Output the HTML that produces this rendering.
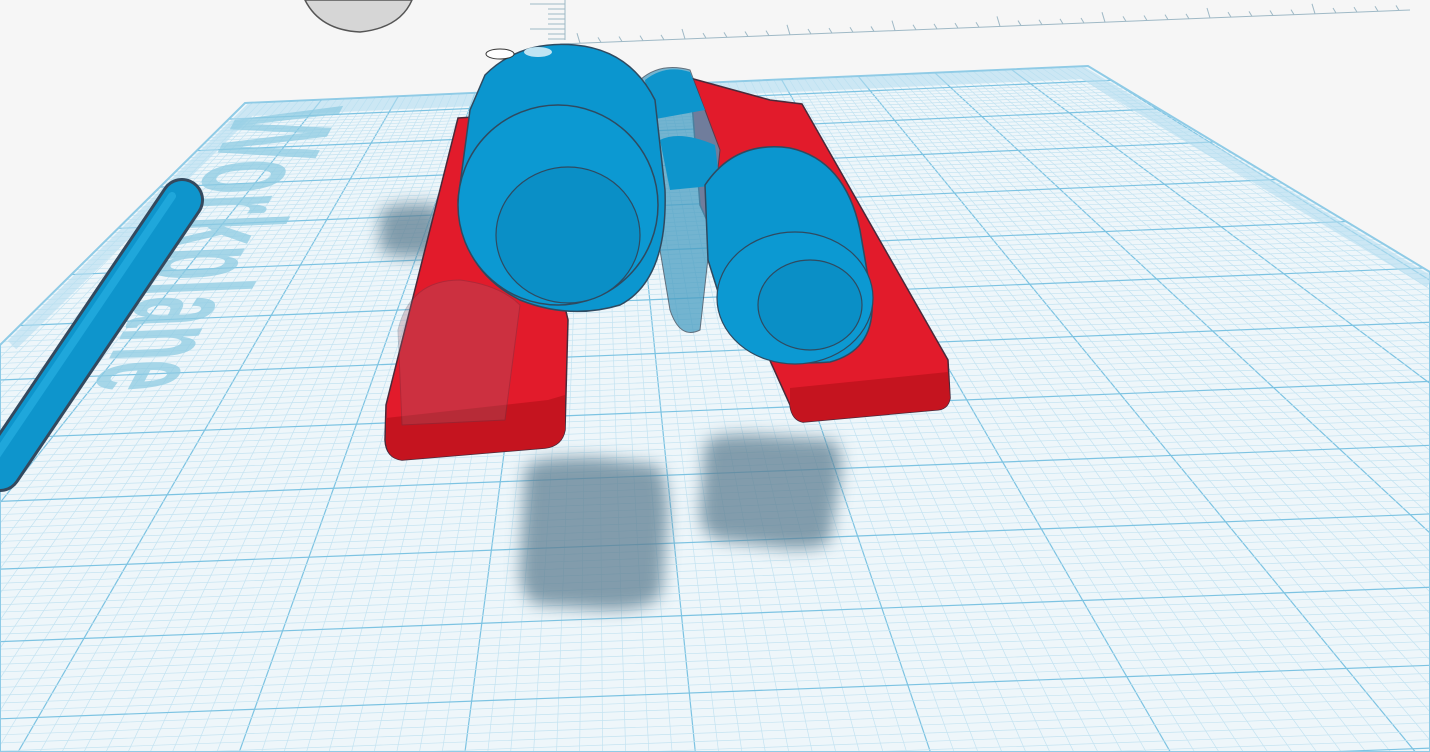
<!DOCTYPE html>
<html><head><meta charset="utf-8"><style>
html,body{margin:0;padding:0;background:#f6f6f6;overflow:hidden;width:1430px;height:752px}
svg{display:block}
</style></head><body>
<svg id="s" width="1430" height="752" viewBox="0 0 1430 752" xmlns="http://www.w3.org/2000/svg">
<defs>
<filter id="b" x="-30%" y="-30%" width="160%" height="160%"><feGaussianBlur stdDeviation="8"/></filter>
<clipPath id="pc"><polygon points="245,103 1088,66 1430,272 1430,752 0,752 0,345"/></clipPath>
</defs>
<rect width="1430" height="752" fill="#f6f6f6"/>
<g stroke="#9fb9c6" stroke-width="1">
<line x1="565" y1="0" x2="565" y2="40"/>
<line x1="560" y1="44" x2="1410" y2="10"/>
</g>
<g id="ticks" stroke="#9fb9c6" stroke-width="1"></g>
<path d="M305,0 Q320,30 360,32 Q400,28 412,0 Z" fill="#d6d6d6" stroke="#555" stroke-width="1.5"/>
<polygon points="245,103 1088,66 1430,272 1430,752 0,752 0,345" fill="#eef6fa"/>
<g clip-path="url(#pc)" id="grid"></g>
<polygon points="245,103 1088,66 1430,272 1430,752 0,752 0,345" fill="none" stroke="#8fcbe6" stroke-width="2"/>
<polyline points="12,345 250,110 1083,73 1430,282" fill="none" stroke="#b5def0" stroke-width="12" opacity="0.6"/>
<text transform="matrix(-0.195,0.37,-1,0.04,240,110)" font-family="Liberation Sans, sans-serif" font-weight="bold" font-size="150" fill="#8fcce3" opacity="0.75">Workplane</text>
<g fill="#5f7f92" opacity="0.75" filter="url(#b)">
<path d="M380,215 Q385,200 440,205 L445,255 Q400,262 380,250 Z"/>
<path d="M525,470 Q530,455 600,458 L655,465 Q668,470 668,520 L662,590 Q655,612 600,610 L540,605 Q520,600 520,570 Z"/>
<path d="M705,445 Q710,432 760,435 L830,440 Q845,445 840,480 L830,540 Q820,552 780,548 L720,540 Q700,535 700,510 Z"/>
</g>
<path d="M182,200 L0,470" stroke="#34495e" stroke-width="44" stroke-linecap="round"/>
<path d="M182,200 L0,470" stroke="#0e95cc" stroke-width="38" stroke-linecap="round"/>
<path d="M172,196 L-8,462" stroke="#2bb3e6" stroke-width="8" stroke-linecap="round" opacity="0.6"/>
<path d="M458,118 L520,114 L568,320 L565,430 Q562,446 545,448 L402,460 Q386,458 385,440 L386,405 Z" fill="#e21b2b" stroke="#4a2a3a" stroke-width="1.5"/>
<path d="M386,418 L548,400 L565,395 L565,430 Q562,446 545,448 L402,460 Q386,458 386,440 Z" fill="#c5141f"/>
<path d="M690,78 L770,100 L802,104 L948,360 L950,398 Q948,410 935,410 L803,422 Q792,420 790,405 L700,205 Z" fill="#e21b2b" stroke="#4a2a3a" stroke-width="1.5"/>
<path d="M790,388 L948,372 L950,398 Q948,410 935,410 L803,422 Q792,420 790,405 Z" fill="#c5141f"/>
<path d="M398,330 Q410,280 460,280 Q500,285 520,305 L505,420 L402,425 Z" fill="#9a6070" opacity="0.3" stroke="#445" stroke-width="1"/>
<path d="M640,80 Q660,62 690,70 L720,150 L700,330 Q680,340 670,310 L660,250 Z" fill="#4a9ec2" opacity="0.75" stroke="#345" stroke-width="1"/>
<path d="M645,80 Q665,64 690,72 L705,110 L650,120 Z" fill="#0e95cc"/>
<path d="M660,140 Q680,130 715,145 L720,185 L670,190 Z" fill="#0e95cc"/>
<path d="M485,75 Q520,40 575,45 Q630,50 655,100 L665,190 Q668,280 620,305 Q570,320 520,300 Q460,270 458,200 L470,110 Z" fill="#0b96cf" stroke="#2f4a60" stroke-width="1.5"/>
<ellipse cx="558" cy="205" rx="100" ry="100" fill="#0c99d2" stroke="#2f4a60" stroke-width="1.5"/>
<ellipse cx="568" cy="235" rx="72" ry="68" fill="#0a8fc6" stroke="#2f4a60" stroke-width="1.2"/>
<ellipse cx="538" cy="52" rx="14" ry="5" fill="#bfe4f3"/>
<path d="M705,185 Q735,140 790,148 Q845,160 860,230 L872,300 Q875,350 830,362 Q760,368 730,330 L708,260 Z" fill="#0b96cf" stroke="#2f4a60" stroke-width="1.5"/>
<ellipse cx="795" cy="298" rx="78" ry="66" fill="#0c99d2" stroke="#2f4a60" stroke-width="1.2"/>
<ellipse cx="810" cy="305" rx="52" ry="45" fill="#0a8fc6" stroke="#2f4a60" stroke-width="1.2"/>
<ellipse cx="500" cy="54" rx="14" ry="5" fill="#fff" stroke="#333" stroke-width="1"/>
</svg>
<script>
var ns="http://www.w3.org/2000/svg",g=document.getElementById("grid");
function L(x1,y1,x2,y2,c,w){var l=document.createElementNS(ns,"line");l.setAttribute("x1",x1);l.setAttribute("y1",y1);l.setAttribute("x2",x2);l.setAttribute("y2",y2);l.setAttribute("stroke",c);l.setAttribute("stroke-width",w);g.appendChild(l);}
var vx=595,vy=-243;
for(var i=-60;i<=170;i++){var t=i/110;var x=245+843*t,y=103-37*t;var dx=x-vx,dy=y-vy;var k=(800-vy)/dy;var maj=i%10==0;L(x,y,vx+dx*k,800,maj?"#7cc3e2":"#c4e3f1",maj?1.2:0.7);}
for(var j=0;j<=200;j++){var u=j/10;var y=103+28*u+2.36*u*u;var sl=-0.044+0.0006*u;var maj=j%10==0;L(-50,y+sl*(-50-595),1500,y+sl*(1500-595),maj?"#7cc3e2":"#c4e3f1",maj?1.2:0.7);}
var tk=document.getElementById("ticks");
for(var i=0;i<40;i++){var x=580+i*21,y=44-(x-560)*0.04;var l=document.createElementNS(ns,"line");l.setAttribute("x1",x);l.setAttribute("y1",y);l.setAttribute("x2",x-3);l.setAttribute("y2",y-(i%5==0?10:5));tk.appendChild(l);}
for(var i=0;i<8;i++){var l=document.createElementNS(ns,"line");var y=4+i*5;l.setAttribute("x1",565);l.setAttribute("y1",y);l.setAttribute("x2",i%5==0?530:548);l.setAttribute("y2",y);tk.appendChild(l);}
</script>
</body></html>
